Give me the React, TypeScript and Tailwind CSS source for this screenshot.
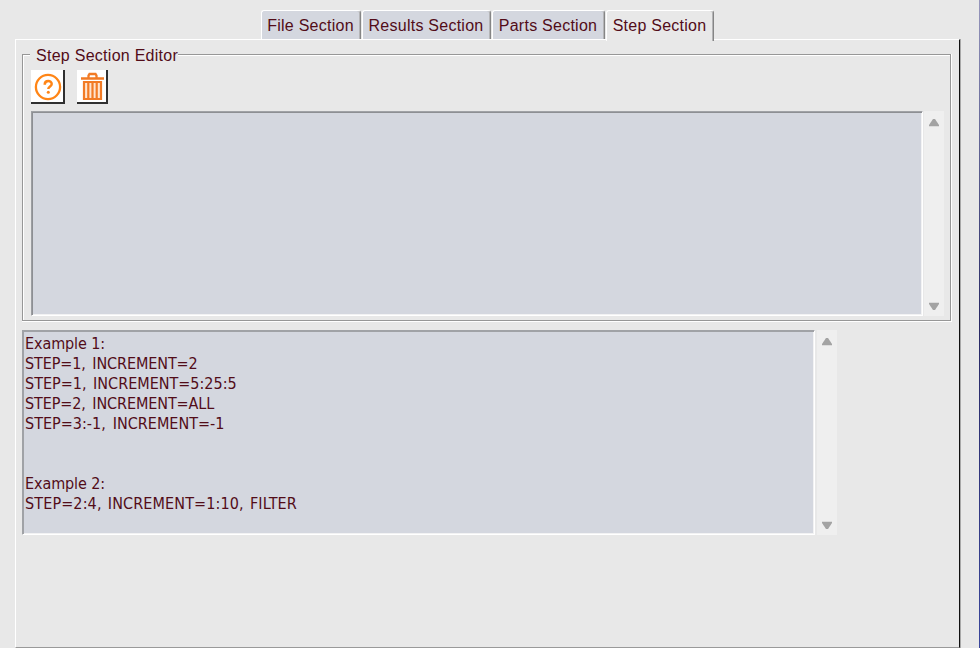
import React from 'react';

const tabBase = 'flex h-[29px] rounded-tl-[3px] rounded-tr-[3px] border-l border-t border-r border-l-white border-t-white border-r-[#858585] shadow-[inset_-1px_0_0_#b4b4b6] justify-center pt-px pr-px leading-[28px] tracking-[0.25px] whitespace-nowrap';

const examples = [
  { text: 'Example 1:', cls: 'tracking-[-0.1px]' },
  { text: 'STEP=1, INCREMENT=2', cls: 'tracking-[-0.1px] [word-spacing:2px]' },
  { text: 'STEP=1, INCREMENT=5:25:5', cls: '[word-spacing:2px]' },
  { text: 'STEP=2, INCREMENT=ALL', cls: 'tracking-[-0.1px] [word-spacing:2px]' },
  { text: 'STEP=3:-1, INCREMENT=-1', cls: '[word-spacing:2.5px]' },
  { text: '', cls: '' },
  { text: '', cls: '' },
  { text: 'Example 2:', cls: 'tracking-[-0.1px]' },
  { text: 'STEP=2:4, INCREMENT=1:10, FILTER', cls: 'tracking-[0.12px] [word-spacing:1.5px]' },
];

function Scrollbar() {
  return (
    <div className="flex h-[205px] w-5 shrink-0 flex-col items-center justify-between bg-[#efefef] pt-[7px] pb-[5px]">
      <svg width="12" height="9" viewBox="0 0 12 9">
        <path d="M5 1h2L11 7v1.2H1V7z" fill="#a3a3a3" />
      </svg>
      <svg width="12" height="9" viewBox="0 0 12 9">
        <path d="M5 8h2L11 2V.8H1V2z" fill="#a3a3a3" />
      </svg>
    </div>
  );
}

export default function App() {
  return (
    <div className="flex h-[648px] w-[980px] overflow-hidden bg-[#e8e8e8] font-['Liberation_Sans',Arial,sans-serif] text-[16px] text-[#520c18]">
      <div className="flex w-[979px] flex-col pt-[10px] pl-[15px]">
        <div className="flex h-[29px] gap-px pl-[246px]">
          <div className={`${tabBase} w-[100px] bg-[#d4d7df]`}>File Section</div>
          <div className={`${tabBase} w-[129px] bg-[#d4d7df]`}>Results Section</div>
          <div className={`${tabBase} w-[113px] bg-[#d4d7df]`}>Parts Section</div>
          <div className={`${tabBase} relative z-10 h-[31px] w-[108px] bg-[#e8e8e8]`}>Step Section</div>
        </div>
        <div className="flex h-[609px] w-[946px] border-r border-r-[#a8a8a8]">
          <div className="flex h-[609px] w-[945px] flex-col border-t border-r border-b border-l border-t-white border-r-[#101010] border-b-[#999] border-l-white pt-[14px] pl-[6px]">
            <div className="h-[268px] w-[930px] border-r border-b border-white">
              <div className="flex h-[267px] w-[929px] flex-col border border-[#979797]">
                <div className="flex h-[266px] flex-col border-t border-l border-white">
                  <div className="-mt-[11px] ml-[6px] h-[20px] w-[148px] bg-[#e8e8e8] pt-px pl-[6px] leading-[20px] tracking-[0.27px] whitespace-nowrap">Step Section Editor</div>
                  <div className="mt-[5px] ml-[7px] flex h-[34px] gap-3">
                    <button className="flex h-[34px] w-[34px] items-center justify-center border-r-2 border-b-2 border-[#303030] bg-white pt-[2px] pl-[2px]">
                      <svg width="28" height="28" viewBox="0 0 28 28" fill="none" stroke="#ff8516">
                        <circle cx="14" cy="14" r="12.1" strokeWidth="2.3" />
                        <path d="M10.7 11.8c0-5 7-4.6 7-.8 0 2.5-3.4 2.4-3.4 5.1" strokeWidth="2.5" />
                        <circle cx="14.3" cy="19.3" r="1.5" fill="#ff8516" stroke="none" />
                      </svg>
                    </button>
                    <button className="flex h-[34px] w-[31px] items-center justify-center border-r-2 border-b-2 border-[#303030] bg-white pt-px pl-[2px]">
                      <svg width="25" height="29" viewBox="0 0 25 29" fill="none" stroke="#f27b25">
                        <path d="M1 6.5h23M8.5 6V3.5l1-1.5h6l1 1.5V6" strokeWidth="2.3" />
                        <path d="M4 10h17v17H4z" fill="#ffe4cf" strokeWidth="2.2" />
                        <path d="M8.3 10v17M12.5 10v17M16.7 10v17" strokeWidth="2.2" />
                      </svg>
                    </button>
                  </div>
                  <div className="mt-[7px] ml-[7px] flex h-[205px] gap-px">
                    <div className="h-[205px] w-[892px] border border-t-[#a0a2a6] border-r-white border-b-white border-l-[#9c9ea2] bg-[#d4d7df] shadow-[inset_1px_1px_0_#8d8f93,inset_-1px_-1px_0_#f2f2f3]" />
                    <Scrollbar />
                  </div>
                </div>
              </div>
            </div>
            <div className="mt-[8px] flex h-[205px] gap-[2px]">
              <div className="h-[205px] w-[793px] border border-t-[#a0a2a6] border-r-white border-b-white border-l-[#a0a2a6] bg-[#d4d7df] pt-[3px] pl-[2px] font-['DejaVu_Sans_Condensed','DejaVu_Sans',sans-serif] text-[16px] shadow-[inset_1px_1px_0_#a0a2a6,inset_-1px_-1px_0_#f2f2f3]">
                {examples.map((line, i) => (
                  <div key={i} className="h-5 leading-5 whitespace-pre"><span className={line.cls}>{line.text}</span></div>
                ))}
              </div>
              <Scrollbar />
            </div>
          </div>
        </div>
      </div>
      <div className="h-[648px] w-px bg-gradient-to-b from-[#9696bc] via-[#292964] to-[#3a469b]" />
    </div>
  );
}
